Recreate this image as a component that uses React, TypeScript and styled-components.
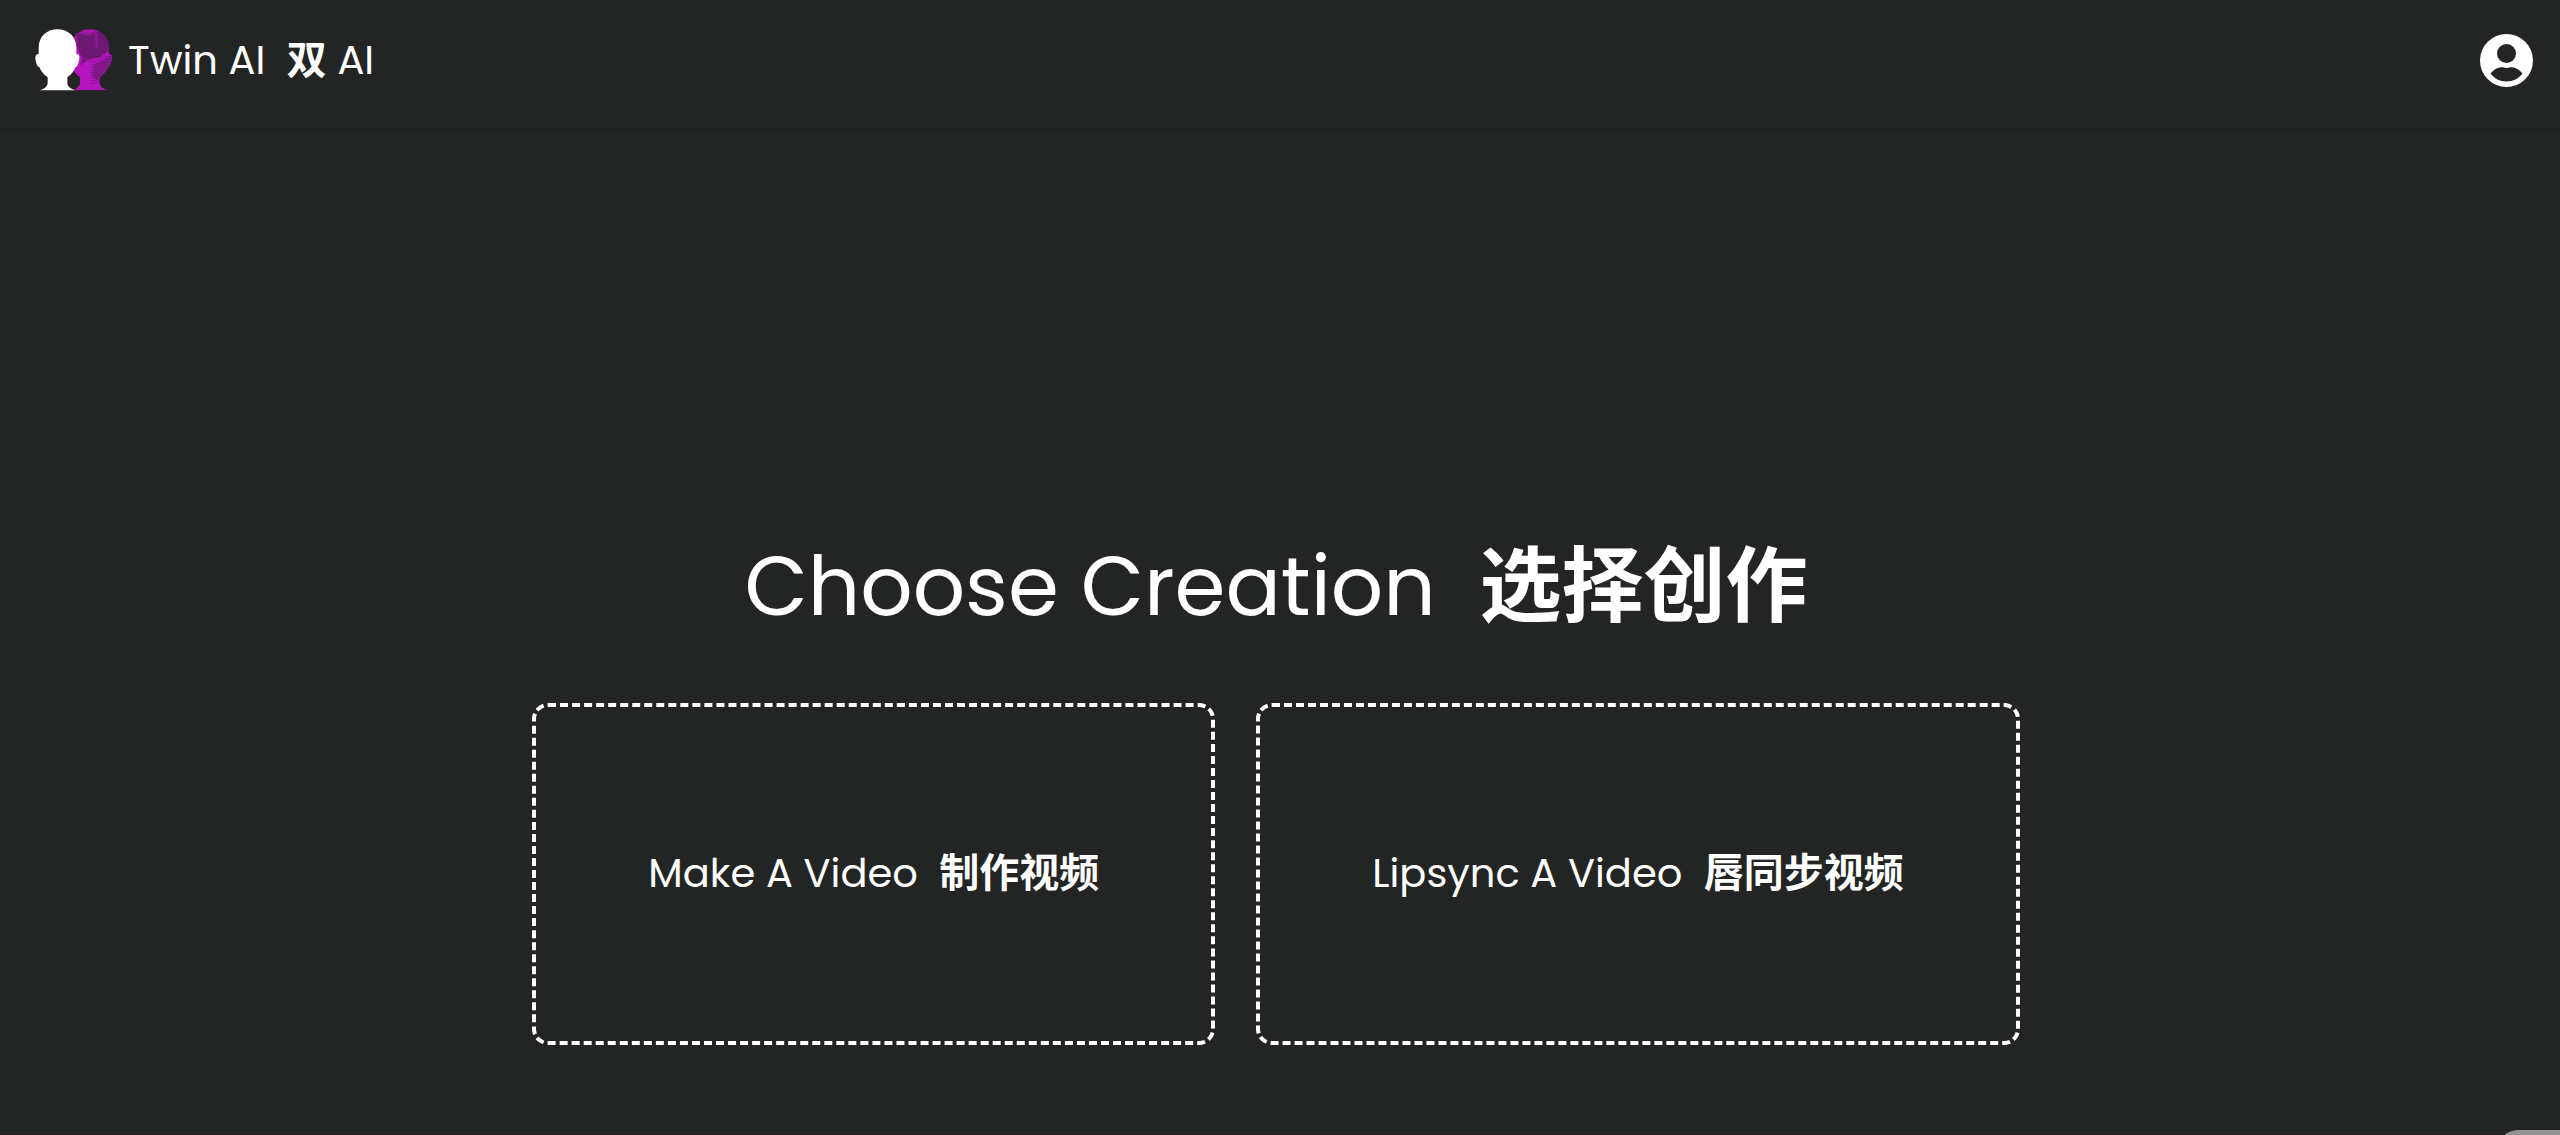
import React from "react";
import styled, { createGlobalStyle } from "styled-components";

const GlobalStyle = createGlobalStyle`
  *, *::before, *::after { box-sizing: border-box; }
  body {
    margin: 0;
    background: #232524;
    color: #fff;
    font-family: Poppins, Inter, "Noto Sans CJK SC", sans-serif;
    font-weight: 400;
  }
`;

const Page = styled.div`
  display: flex;
  flex-direction: column;
  min-height: 100vh;
  border-bottom: 1px solid #1e171b;
`;

const Header = styled.header`
  display: flex;
  align-items: center;
  justify-content: space-between;
  height: 128px;
  padding: 0 27px 8px 35px;
  box-shadow: 0 2px 6px rgba(0, 0, 0, 0.16);
`;

const Brand = styled.a`
  display: flex;
  align-items: center;
  gap: 15px;
  color: inherit;
  text-decoration: none;
  font-size: 40px;
  line-height: 60px;
  white-space: pre;
`;

const BrandName = styled.span`
  padding-bottom: 4px;
`;

const Chinese = styled.span`
  font-family: "Noto Sans CJK SC", sans-serif;
  font-weight: 700;
`;

const IconButton = styled.button`
  display: flex;
  padding: 0;
  border: 0;
  background: none;
  color: #fff;
  cursor: pointer;
`;

const Main = styled.main`
  flex: 1;
  display: flex;
  flex-direction: column;
  align-items: center;
  justify-content: flex-end;
  gap: 53px;
  padding: 0 8px 89px 0;
`;

const Title = styled.h1`
  margin: 0;
  font-size: 82px;
  font-weight: 400;
  line-height: 126px;
  white-space: pre;
`;

const Choices = styled.div`
  display: flex;
  gap: 41px;
`;

const Choice = styled.button`
  height: 342px;
  padding: 0 112px 4px;
  border: 4px dashed #fff;
  border-radius: 16px;
  background: none;
  color: #fff;
  font: inherit;
  font-size: 40px;
  white-space: pre;
  cursor: pointer;
`;

const ChatLauncher = styled.button`
  position: fixed;
  right: 0;
  bottom: -43px;
  width: 62px;
  height: 48px;
  padding: 0;
  border: 0;
  border-radius: 20px 0 0 20px;
  background: #949293;
`;

const head =
  "M97 28C130 28 154 50 154 84V102C164 101 165 112 162 122C160 132 157 140 151 141C147 153 140 163 127 172V190C128 200 137 207 151 211H45C58 207 67 200 68 190V172C55 163 48 153 43 141C37 140 34 132 32 122C30 112 31 101 41 102V84C41 50 65 28 97 28Z";

const capWaves = Array.from({ length: 13 }, (_, i) => {
  const y = 36 + i * 6;
  return `M150 ${y}q14 -6 26 0t26 3t24 0t30 8`;
}).join("");

const jawWaves = Array.from({ length: 9 }, (_, i) => {
  const y = 112 + i * 8;
  return `M196 ${y + 14}q16 2 30 -8t36 -10`;
}).join("");

function Logo() {
  return (
    <svg width="78" height="64" viewBox="30 24 234 192" aria-hidden="true">
      <defs>
        <clipPath id="twin">
          <path d={head} transform="translate(97 0)" />
        </clipPath>
      </defs>
      <g clipPath="url(#twin)">
        <path fill="#b414bd" d="M120 20h150v200H120z" />
        <path
          fill="#7a1a80"
          d="M156 46C166 36 176 44 188 46C198 48 206 44 207 28L232 34L256 62L254 94C244 98 236 108 226 114C214 112 204 116 190 120C178 124 172 134 167 138C168 120 156 104 156 84Z"
        />
        <path fill="none" stroke="#4e1d52" strokeWidth="2" d={capWaves} opacity="0.8" />
        <path fill="#b414bd" d="M150 60C160 78 158 96 172 112L164 140L146 130Z" />
        <path fill="#b414bd" d="M206 28C210 48 208 66 216 88C222 66 216 46 216 28Z" opacity="0.5" />
        <path fill="#b414bd" d="M254 90C242 96 234 110 216 116C196 118 178 124 164 142V172L196 180H262V96Z" />
        <path fill="#8a1891" d="M264 106C248 108 234 122 214 130C200 140 206 154 200 166C208 178 220 184 236 180L264 140Z" />
        <path fill="none" stroke="#561c5a" strokeWidth="2" d={jawWaves} opacity="0.6" />
      </g>
      <path fill="#fff" d={head} />
    </svg>
  );
}

function AccountIcon() {
  return (
    <svg width="53" height="53" viewBox="0 0 53 53" aria-hidden="true">
      <path
        fill="currentColor"
        fillRule="evenodd"
        d="M26.500 0a26.500 26.500 0 1 1 0 53a26.500 26.500 0 1 1 0-53ZM26.500 10a9.500 9.500 0 1 0 0 19a9.500 9.500 0 1 0 0-19ZM10.500 39.500c3-3.800 7-6.300 10.500-6.300 2 0 3.500.7 5.500.7s3.500-.7 5.500-.7c3.500 0 7.500 2.500 10.500 6.300-3.500 5-9.500 8-16 8s-12.500-3-16-8Z"
      />
    </svg>
  );
}

export default function App() {
  return (
    <Page>
      <GlobalStyle />
      <Header>
        <Brand href="#">
          <Logo />
          <BrandName>
            {"Twin AI  "}
            <Chinese lang="zh">双</Chinese>
            {" AI"}
          </BrandName>
        </Brand>
        <IconButton type="button" aria-label="Account">
          <AccountIcon />
        </IconButton>
      </Header>
      <Main>
        <Title>
          {"Choose Creation  "}
          <Chinese lang="zh">选择创作</Chinese>
        </Title>
        <Choices>
          <Choice type="button">
            {"Make A Video  "}
            <Chinese lang="zh">制作视频</Chinese>
          </Choice>
          <Choice type="button">
            {"Lipsync A Video  "}
            <Chinese lang="zh">唇同步视频</Chinese>
          </Choice>
        </Choices>
      </Main>
      <ChatLauncher type="button" aria-label="Open chat" />
    </Page>
  );
}
